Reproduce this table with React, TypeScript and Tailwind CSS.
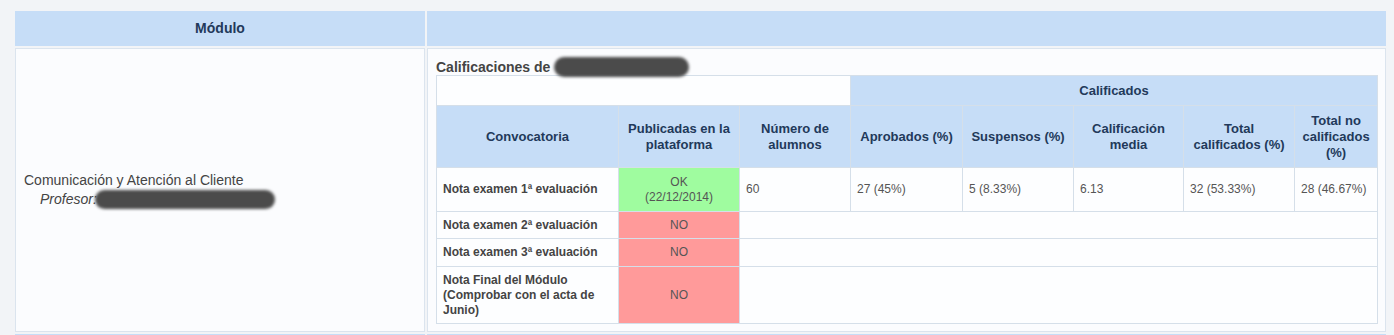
const head = 'bg-[#c6ddf7] text-[#22395a] font-bold';
const cell = 'border border-[#d5dfe9]';

type Row = { label: string; ok?: string[]; values?: string[]; h: string };

const rows: Row[] = [
  {
    label: 'Nota examen 1ª evaluación',
    ok: ['OK', '(22/12/2014)'],
    values: ['60', '27 (45%)', '5 (8.33%)', '6.13', '32 (53.33%)', '28 (46.67%)'],
    h: 'h-[44px]',
  },
  { label: 'Nota examen 2ª evaluación', h: 'h-[27px]' },
  { label: 'Nota examen 3ª evaluación', h: 'h-[28px]' },
  { label: 'Nota Final del Módulo (Comprobar con el acta de Junio)', h: 'h-[57px]' },
];

// "\n" forces the same break the original page shows
const headers = [
  'Convocatoria',
  'Publicadas en la plataforma',
  'Número de alumnos',
  'Aprobados (%)',
  'Suspensos (%)',
  'Calificación media',
  'Total\ncalificados (%)',
  'Total no calificados (%)',
];

const colWidths = ['w-[182px]', 'w-[121px]', 'w-[111px]', 'w-[112px]', 'w-[111px]', 'w-[110px]', 'w-[111px]', 'w-[83px]'];

function Redacted({ className }: { className: string }) {
  return <span className={`inline-block align-middle rounded-full bg-[#4b4b4b] blur-[1.5px] ${className}`} />;
}

function GradesTable() {
  return (
    <table className="table-fixed border-collapse w-[941px] text-[12px] leading-[15px] text-[#555]">
      <colgroup>
        {colWidths.map((w, i) => (
          <col key={i} className={w} />
        ))}
      </colgroup>
      <tbody>
        <tr className="h-[30px]">
          <td colSpan={3} className={`${cell} bg-[#fdfeff]`} />
          <td colSpan={5} className={`${cell} ${head} text-[13px] leading-[16px] text-center`}>
            Calificados
          </td>
          <td className={`${cell} bg-[#fdfeff]`} />
        </tr>
        <tr className="h-[62px]">
          {headers.map((h) => (
            <td key={h} className={`${cell} ${head} text-[13px] leading-[16px] text-center px-[4px] whitespace-pre-line`}>
              {h}
            </td>
          ))}
        </tr>
        {rows.map((r) => (
          <tr key={r.label} className={`${r.h} bg-[#fdfeff]`}>
            <td className={`${cell} px-[6px] font-bold text-[#444]`}>{r.label}</td>
            {r.ok ? (
              <td className={`${cell} bg-[#9ffc9f] text-center`}>
                {r.ok[0]}
                <br />
                {r.ok[1]}
              </td>
            ) : (
              <td className={`${cell} bg-[#ff9a9a] text-center`}>NO</td>
            )}
            {r.values ? (
              r.values.map((v, i) => (
                <td key={i} className={`${cell} px-[6px]`}>
                  {v}
                </td>
              ))
            ) : (
              <td colSpan={6} className={cell} />
            )}
          </tr>
        ))}
      </tbody>
    </table>
  );
}

export default function App() {
  return (
    <div className="w-[1394px] h-[335px] overflow-hidden bg-[#f2f4f7] font-['Liberation_Sans',Arial,sans-serif] pt-[9px] pl-[13px]">
      <table className="border-separate border-spacing-[2px] table-fixed w-[1375px]">
        <colgroup>
          <col className="w-[410px]" />
          <col className="w-[959px]" />
        </colgroup>
        <tbody>
          <tr className="h-[35px]">
            <td className={`${head} text-[14px] text-center`}>Módulo</td>
            <td className={head} />
          </tr>
          <tr className="h-[284px]">
            <td className="border border-[#dbe4ee] bg-[#fbfcfe] px-[8px] align-middle text-[14px] leading-[19px] text-[#444]">
              Comunicación y Atención al Cliente
              <br />
              <span className="pl-[16px] italic">Profesor:</span>
              <Redacted className="w-[180px] h-[19px] -ml-[2px]" />
            </td>
            <td className="border border-[#dbe4ee] bg-[#fbfcfe] px-[8px] pt-[10px] align-top">
              <div className="h-[16px] leading-[16px] text-[14px] font-bold text-[#444] whitespace-nowrap">
                Calificaciones de
                <Redacted className="w-[135px] h-[20px] ml-[4px] -mt-[2px]" />
              </div>
              <GradesTable />
            </td>
          </tr>
          <tr className="h-[30px]">
            <td className={head} />
            <td className={head} />
          </tr>
        </tbody>
      </table>
    </div>
  );
}
